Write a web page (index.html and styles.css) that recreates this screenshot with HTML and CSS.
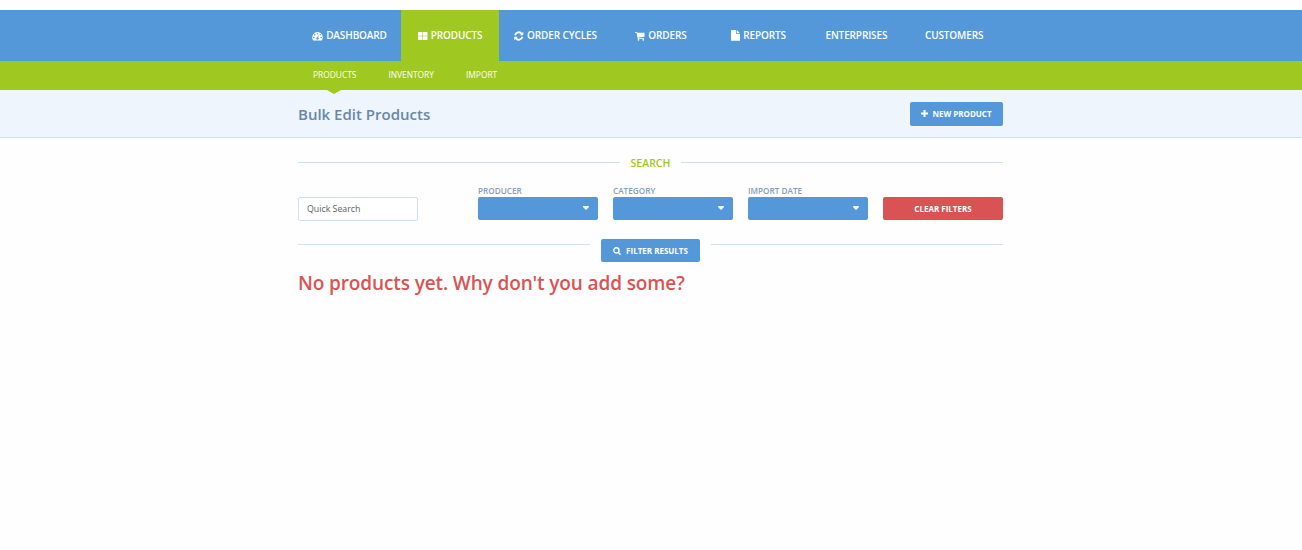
FILE: index.html
```html
<!DOCTYPE html>
<html lang="en">
<head>
<meta charset="utf-8">
<title>Bulk Edit Products</title>
<link rel="stylesheet" href="styles.css">
</head>
<body>
<nav class="main-nav">
  <div class="container tabs">
    <a class="tab tab-dashboard"><svg class="icon" width="11" height="10" viewBox="0 0 22 20"><path fill="currentColor" fill-rule="evenodd" d="M11 2A11 11 0 0 0 2 18.500Q2.300 19 3 19H19Q19.700 19 20 18.500A11 11 0 0 0 11 2ZM11 4a1.500 1.500 0 1 1 0 3 1.500 1.500 0 0 1 0-3ZM5.500 6.200a1.500 1.500 0 1 1 0 3 1.500 1.500 0 0 1 0-3ZM16.500 6.200a1.500 1.500 0 1 1 0 3 1.500 1.500 0 0 1 0-3ZM3.500 11.500a1.500 1.500 0 1 1 0 3 1.500 1.500 0 0 1 0-3ZM18.500 11.500a1.500 1.500 0 1 1 0 3 1.500 1.500 0 0 1 0-3ZM12 8.500L13.300 8.900L12.200 13A2.300 2.300 0 1 1 10.800 12.700Z"/></svg><span>DASHBOARD</span></a>
    <a class="tab tab-products active"><svg class="icon" width="10" height="10" viewBox="0 0 20 20"><path fill="currentColor" d="M1 2h7q1 0 1 1v6.500H0V3q0-1 1-1ZM11 2h7q1 0 1 1v6.500h-9V3q0-1 1-1ZM0 10.500h9V17q0 1-1 1H1q-1 0-1-1ZM10 10.500h9V17q0 1-1 1h-7q-1 0-1-1Z"/></svg><span>PRODUCTS</span></a>
    <a class="tab tab-cycles"><svg class="icon" width="10" height="10" viewBox="0 0 20 20"><path fill="none" stroke="currentColor" stroke-width="3.600" d="M2.200 8.500A7.500 7.500 0 0 1 15.500 5.500M16.800 11.500A7.500 7.500 0 0 1 3.500 14.500"/><path fill="currentColor" d="M18.500 1.500V8.500H11.500ZM.5 18.500V11.500H7.500Z"/></svg><span>ORDER CYCLES</span></a>
    <a class="tab tab-even"><svg class="icon" width="10" height="10" viewBox="0 0 20 20"><path fill="currentColor" d="M0 2h3.800q.9 0 1.200 1.600H19v8L7 13l.2 1.500H18V16H5.600L3.200 3.700H0Z"/><circle cx="7" cy="17.700" r="1.700" fill="currentColor"/><circle cx="16.500" cy="17.700" r="1.700" fill="currentColor"/></svg><span>ORDERS</span></a>
    <a class="tab tab-even"><svg class="icon" width="9" height="11" viewBox="0 0 18 22"><path fill="currentColor" d="M1 0h9v7.200q0 .8.800.8H18v12.500q0 1-1 1H1q-1 0-1-1V1q0-1 1-1ZM11.500 0L18 6.500H11.500Z"/></svg><span>REPORTS</span></a>
    <a class="tab tab-even"><span>ENTERPRISES</span></a>
    <a class="tab tab-even"><span>CUSTOMERS</span></a>
  </div>
</nav>
<nav class="sub-nav">
  <div class="container sub-links">
    <a class="sub-link current">PRODUCTS</a>
    <a class="sub-link">INVENTORY</a>
    <a class="sub-link">IMPORT</a>
  </div>
</nav>
<header class="page-header">
  <div class="container header-row">
    <h1 class="title">Bulk Edit Products</h1>
    <button class="button new-product"><svg width="7" height="7" viewBox="0 0 7 7"><path fill="currentColor" d="M2.500 0h2v2.500H7v2H4.500V7h-2V4.500H0v-2h2.500Z"/></svg><span>NEW PRODUCT</span></button>
  </div>
</header>
<main class="container">
  <div class="divider search-divider"><span class="search-title">SEARCH</span></div>
  <div class="filters">
    <div class="quick"><input class="quick-input" placeholder="Quick Search"></div>
    <div class="field"><label class="label">PRODUCER</label><div class="select"><svg width="6" height="4" viewBox="0 0 6 4"><path fill="currentColor" d="M.5 0h5q.5 0 .5.5v.5L3.300 3.800h-.6L0 1V.5Q0 0 .5 0Z"/></svg></div></div>
    <div class="field"><label class="label">CATEGORY</label><div class="select"><svg width="6" height="4" viewBox="0 0 6 4"><path fill="currentColor" d="M.5 0h5q.5 0 .5.5v.5L3.300 3.800h-.6L0 1V.5Q0 0 .5 0Z"/></svg></div></div>
    <div class="field"><label class="label">IMPORT DATE</label><div class="select"><svg width="6" height="4" viewBox="0 0 6 4"><path fill="currentColor" d="M.5 0h5q.5 0 .5.5v.5L3.300 3.800h-.6L0 1V.5Q0 0 .5 0Z"/></svg></div></div>
    <button class="button clear">CLEAR FILTERS</button>
  </div>
  <div class="divider results-divider"><button class="button filter"><svg width="8" height="8" viewBox="0 0 16 16"><g fill="none" stroke="currentColor" stroke-width="2.800"><circle cx="6.800" cy="6.800" r="5.200"/><path stroke-linecap="round" d="M10.500 10.500L14.300 14.300"/></g></svg><span>FILTER RESULTS</span></button></div>
  <p class="empty">No products yet. Why don't you add some?</p>
</main>
</body>
</html>
```
FILE: styles.css
```css
* { box-sizing: border-box; }
body {
  margin: 0;
  padding-top: 10px;
  min-height: 550px;
  background: #fefefe;
  font-family: "Open Sans", sans-serif;
}
.container { width: 705px; margin-left: 298px; }
.main-nav { height: 51px; background: #5498da; }
.tabs { display: flex; height: 51px; }
.tab {
  display: flex;
  align-items: center;
  justify-content: center;
  gap: 3px;
  color: #fff;
  font-size: 10px;
  font-weight: 600;
  letter-spacing: -0.12px;
  white-space: nowrap;
}
.tab span { padding-bottom: 2px; }
.icon { flex: none; }
.tab-dashboard { width: 103px; }
.tab-products { width: 98px; }
.tab-cycles { width: 113px; }
.tab-even { flex: 1; }
.active { background: #9fc820; }
.sub-nav { height: 29px; background: #9fc820; }
.sub-links { display: flex; gap: 32px; padding-left: 15px; }
.sub-link {
  position: relative;
  color: #fff;
  font-size: 8.4px;
  line-height: 28px;
}
.current::after {
  content: "";
  position: absolute;
  top: 29px;
  left: 14px;
  border: solid transparent;
  border-width: 4px 7px 0;
  border-top-color: #9fc820;
}
.page-header {
  height: 48px;
  background: #eef5fd;
  border-bottom: 1px solid #cee1f4;
}
.header-row {
  display: flex;
  align-items: center;
  justify-content: space-between;
  height: 48px;
}
.title { margin: 0; color: #6788a8; font-size: 15px; font-weight: 600; line-height: 20px; }
.button {
  display: flex;
  align-items: center;
  justify-content: center;
  height: 23px;
  padding: 0;
  border: 0;
  border-radius: 2px;
  background: #5498da;
  color: #fff;
  font: 700 8px "Open Sans", sans-serif;
  white-space: nowrap;
}
.new-product { width: 93px; height: 24px; gap: 4px; padding-bottom: 1px; }
.divider { display: flex; }
.divider::before, .divider::after {
  content: "";
  flex: 1;
  height: 1px;
  background: #cee1f4;
}
.search-divider { align-items: center; gap: 11px; height: 14px; margin-top: 18px; padding-bottom: 1px; }
.search-title { color: #9fc820; font-size: 10.500px; font-weight: 600; line-height: 14px; }
.filters { display: flex; align-items: flex-start; gap: 15px; height: 36px; margin-top: 15px; }
.quick { width: 165px; padding-top: 12px; }
.quick-input {
  display: block;
  width: 120px;
  height: 24px;
  padding: 0 8px 1px;
  border: 1px solid #cee1f4;
  border-radius: 2px;
  background: #fff;
  font: 8.800px "Open Sans", sans-serif;
}
.quick-input::placeholder { color: #5c6268; }
.field { width: 120px; }
.label { display: block; height: 12px; color: #819fbd; font-size: 8.200px; font-weight: 600; line-height: 12px; }
.select {
  display: flex;
  align-items: center;
  justify-content: flex-end;
  height: 23px;
  padding: 0 9px 1px 0;
  border-radius: 2px;
  background: #5498da;
  color: #fff;
}
.clear { width: 120px; margin-top: 12px; background: #da5354; }
.results-divider { align-items: flex-start; gap: 11px; margin-top: 18px; height: 23px; }
.results-divider::before, .results-divider::after { margin-top: 5px; }
.filter { width: 99px; gap: 5px; }
.empty { margin: 7px 0 0; color: #da5354; font-size: 19px; font-weight: 600; letter-spacing: -0.12px; line-height: 28px; white-space: nowrap; }
```
